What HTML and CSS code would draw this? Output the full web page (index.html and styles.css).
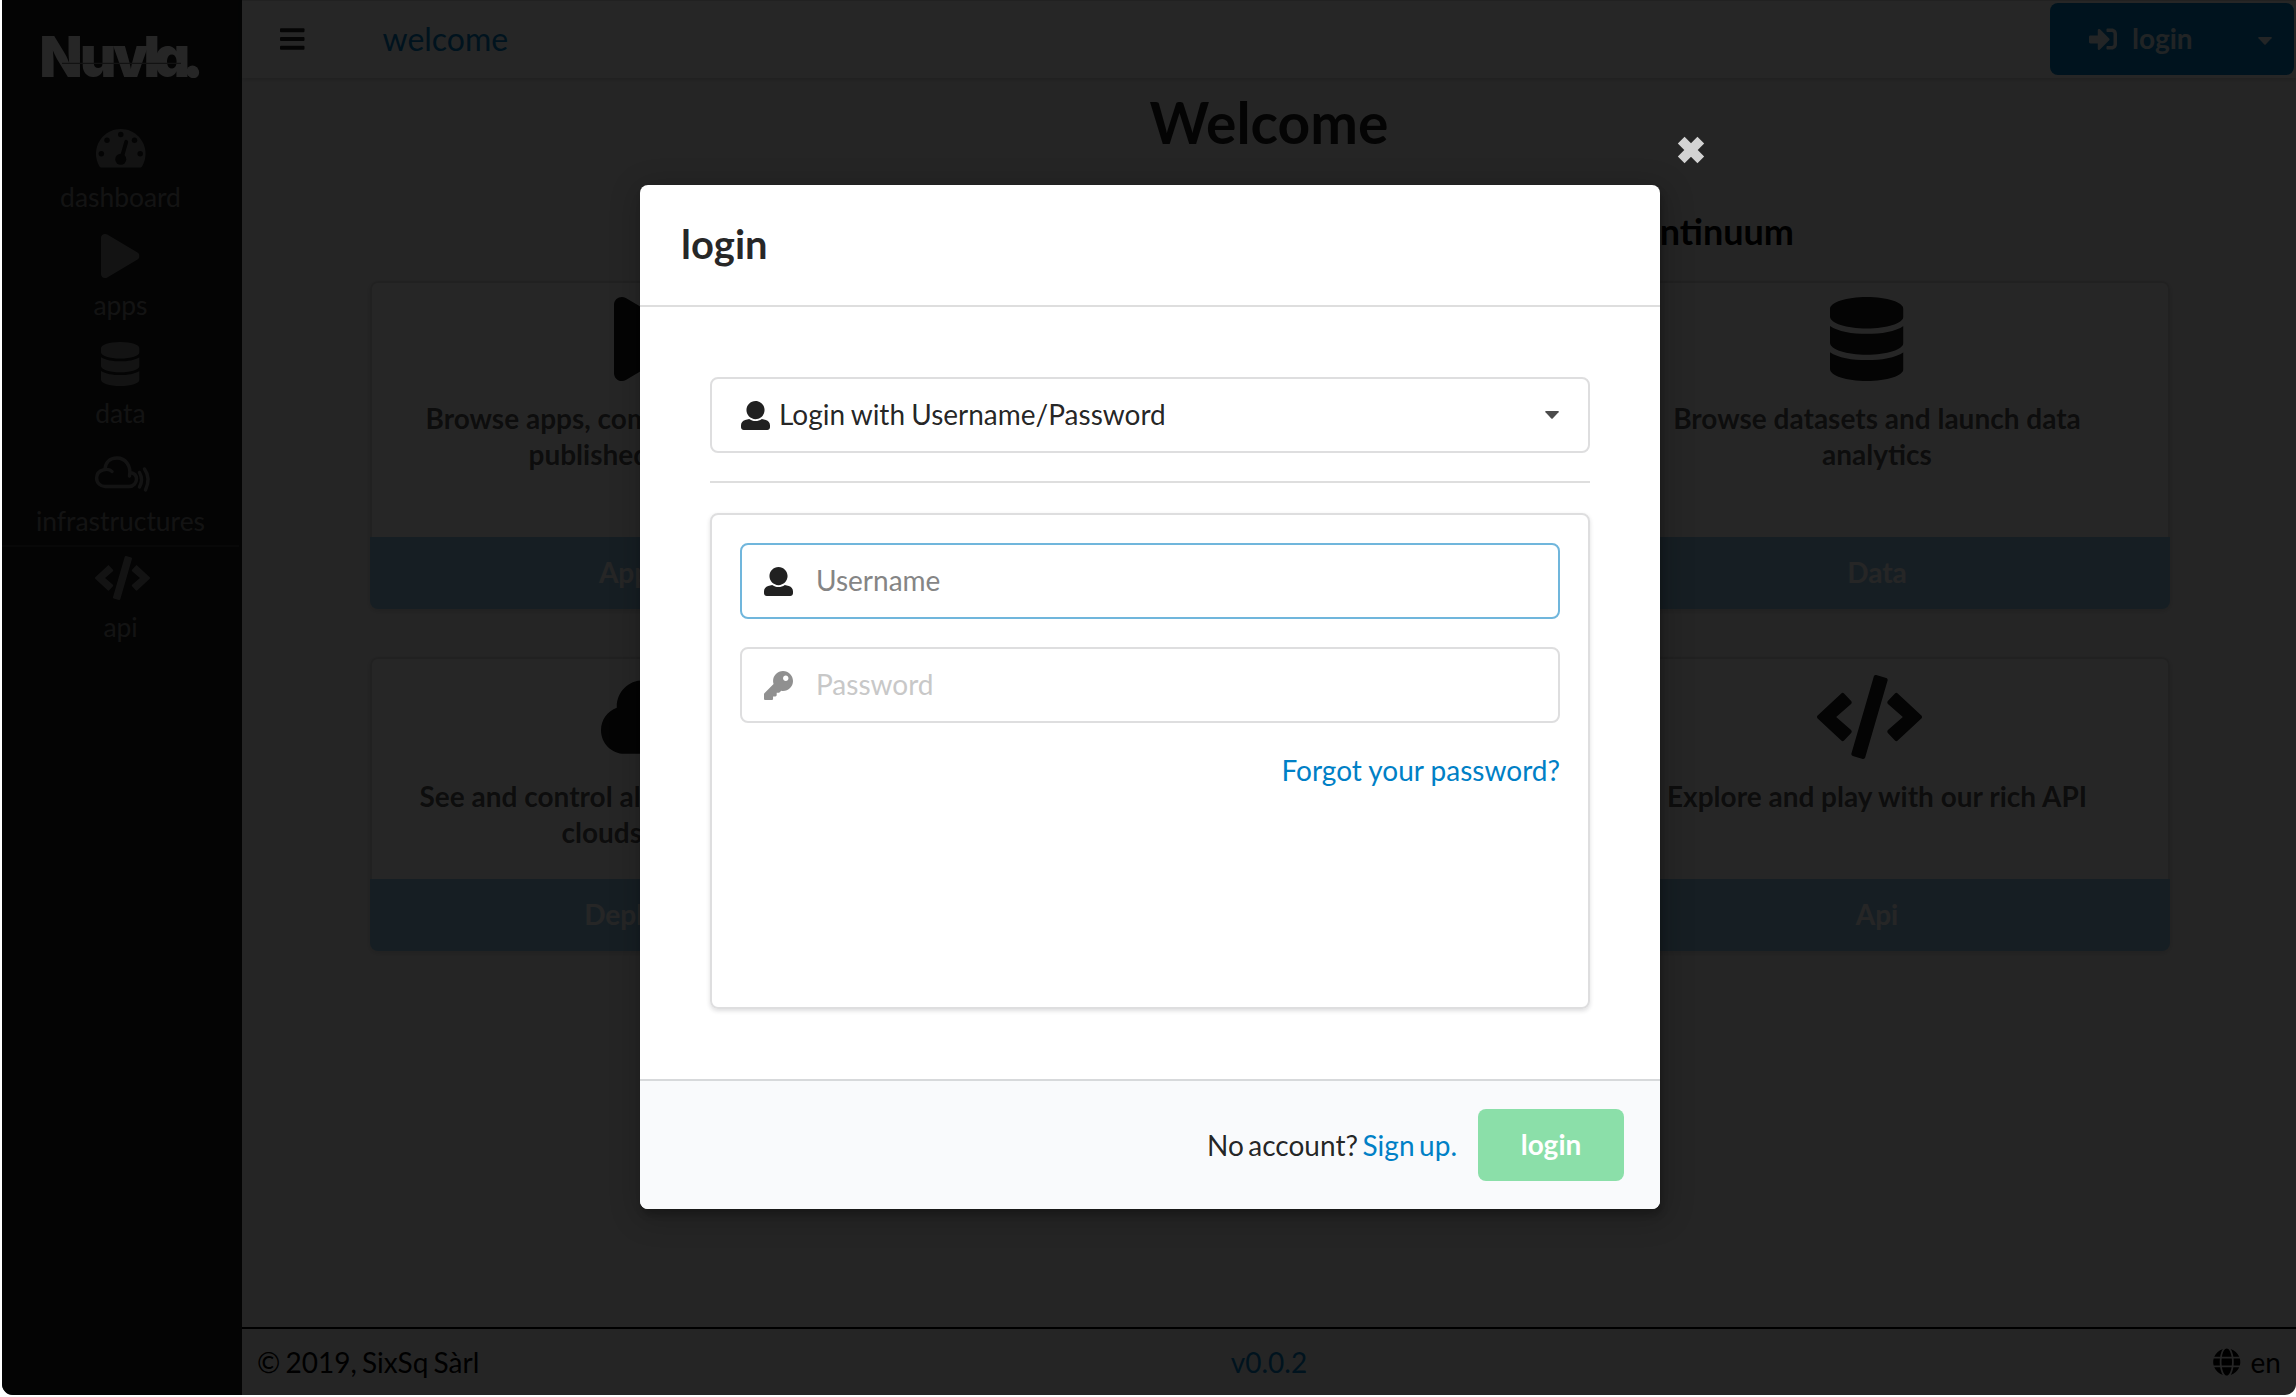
FILE: index.html
```html
<!DOCTYPE html>
<html lang="en">
<head>
<meta charset="utf-8">
<title>Nuvla</title>
<link rel="stylesheet" href="styles.css">
</head>
<body>
<svg class="defs" aria-hidden="true">
  <symbol id="play" viewBox="0 0 448 512"><path d="M424.4 214.7L72.4 6.6C43.8-10.3 0 6.1 0 47.9V464c0 37.5 40.7 60.1 72.4 41.3l352-208c31.4-18.5 31.5-64.1 0-82.6z"/></symbol>
  <symbol id="database" viewBox="0 0 448 512"><path d="M448 73.143v45.714C448 159.143 347.667 192 224 192S0 159.143 0 118.857V73.143C0 32.857 100.333 0 224 0s224 32.857 224 73.143zM448 176v102.857C448 319.143 347.667 352 224 352S0 319.143 0 278.857V176c48.125 33.143 136.208 48.572 224 48.572S399.874 209.143 448 176zm0 160v102.857C448 479.143 347.667 512 224 512S0 479.143 0 438.857V336c48.125 33.143 136.208 48.572 224 48.572S399.874 369.143 448 336z"/></symbol>
  <symbol id="code" viewBox="0 0 640 512"><path d="M278.9 511.5l-61-17.7c-6.4-1.8-10-8.5-8.2-14.9L346.2 8.7c1.8-6.4 8.5-10 14.9-8.2l61 17.7c6.4 1.8 10 8.5 8.2 14.9L293.8 503.3c-1.9 6.4-8.5 10.1-14.9 8.2zm-114-112.2l43.5-46.4c4.6-4.9 4.3-12.7-.8-17.2L117 256l90.6-79.7c5.1-4.5 5.5-12.3.8-17.2l-43.5-46.4c-4.5-4.8-12.1-5.1-17-.5L3.8 247.2c-5.1 4.7-5.1 12.8 0 17.5l144.1 135.1c4.9 4.6 12.5 4.4 17-.5zm327.2.6l144.1-135.1c5.1-4.7 5.1-12.8 0-17.5L492.1 112.1c-4.8-4.5-12.4-4.3-17 .5L431.6 159c-4.6 4.9-4.3 12.7.8 17.2L523 256l-90.6 79.7c-5.1 4.5-5.5 12.3-.8 17.2l43.5 46.4c4.5 4.9 12.1 5.1 17 .6z"/></symbol>
  <symbol id="cloud" viewBox="0 0 640 512"><path d="M537.6 226.6c4.1-10.7 6.4-22.4 6.4-34.6 0-53-43-96-96-96-19.7 0-38.1 6-53.3 16.2C367 64.2 315.3 32 256 32c-88.4 0-160 71.6-160 160 0 2.7.1 5.4.2 8.1C40.2 219.8 0 273.2 0 336c0 79.5 64.5 144 144 144h368c70.7 0 128-57.3 128-128 0-61.9-44-113.6-102.4-125.4z"/></symbol>
  <symbol id="user" viewBox="0 0 512 512"><path d="M256 0c88.366 0 160 71.634 160 160s-71.634 160-160 160S96 248.366 96 160 167.634 0 256 0zm183.283 333.821l-71.313-17.828c-74.923 53.89-165.738 41.864-223.94 0l-71.313 17.828C29.981 344.505 0 382.903 0 426.955V464c0 26.51 21.49 48 48 48h416c26.51 0 48-21.49 48-48v-37.045c0-44.052-29.981-82.45-72.717-93.134z"/></symbol>
</svg>

<div class="window">
  <nav class="sidebar">
    <svg class="logo" viewBox="0 0 160 50" role="img" aria-label="Nuvla.">
      <text class="logo-text" y="47" x="-2.5 38 71 101.5 112 141">Nuvla.</text>
      <circle cx="150.5" cy="41.5" r="6"/>
      <path class="logo-cut" d="M20 33.3H139"/>
    </svg>
    <a class="item">
      <span class="glyph"><svg width="49.5" height="38.5" viewBox="0 0 576 448"><path d="M288 0C128.900 0 0 129 0 288c0 52.800 14.300 102.300 39 144.800 5.600 9.600 16.300 15.200 27.400 15.200h443.200c11.100 0 21.800-5.600 27.400-15.200 24.700-42.500 39-92 39-144.800C576 129 447.100 0 288 0z"/><g class="hole"><circle cx="288" cy="64" r="32"/><circle cx="128" cy="132" r="32"/><circle cx="448" cy="132" r="32"/><circle cx="62" cy="288" r="32"/><circle cx="514" cy="288" r="32"/><circle cx="288" cy="352" r="64"/><path d="M300 330L352 150" stroke-width="46" stroke-linecap="round"/></g></svg></span>
      <span class="label">dashboard</span>
    </a>
    <a class="item"><span class="glyph"><svg width="38.500" height="44"><use href="#play"/></svg></span><span class="label">apps</span></a>
    <a class="item"><span class="glyph"><svg width="38.500" height="44"><use href="#database"/></svg></span><span class="label">data</span></a>
    <a class="item">
      <span class="glyph wide"><svg class="line" width="55" height="33" viewBox="0 0 55 33"><path d="M17 15.500C14 12 2 12.500 1.600 22c0 5 4 8.500 8.500 8.500H34c4.500 0 7.500-3.500 7.500-7.500 0-3.500-2.500-6-6.500-6.500M34.500 20c2-10-4-18-12.500-18C14.500 2 10.500 7 10 13"/><path d="M44.500 16.500q4 7 0 14.500M49.500 13q6.500 9 1 21"/></svg></span>
      <span class="label">infrastructures</span>
    </a>
    <div class="rule"></div>
    <a class="item last"><span class="glyph wide"><svg width="55" height="44"><use href="#code"/></svg></span><span class="label">api</span></a>
  </nav>

  <div class="page">
    <header class="topbar">
      <svg class="bars" width="24.500" height="28" viewBox="0 0 448 512"><rect y="60" width="448" height="72" rx="16"/><rect y="220" width="448" height="72" rx="16"/><rect y="380" width="448" height="72" rx="16"/></svg>
      <a class="crumb">welcome</a>
      <button class="session">
        <svg width="28" height="28" viewBox="0 0 512 512"><path d="M416 448h-84c-6.600 0-12-5.400-12-12v-40c0-6.600 5.400-12 12-12h84c17.700 0 32-14.300 32-32V160c0-17.700-14.300-32-32-32h-84c-6.600 0-12-5.400-12-12V76c0-6.600 5.400-12 12-12h84c53 0 96 43 96 96v192c0 53-43 96-96 96zm-47-201L201 79c-15-15-41-4.500-41 17v96H24c-13.300 0-24 10.700-24 24v96c0 13.300 10.700 24 24 24h136v96c0 21.500 26 32 41 17l168-168c9.300-9.400 9.300-24.600 0-34z"/></svg>
        <span>login</span>
        <svg class="caret" width="14" height="8" viewBox="0 0 14 8"><path d="M1 0h12q1.500 0 .5 1.300L7.700 7.500q-.7.700-1.400 0L.5 1.300Q-.5 0 1 0z"/></svg>
      </button>
    </header>

    <main class="content">
      <h1>Welcome</h1>
      <h2>Edge to cloud continuum</h2>
      <div class="cards">
        <section class="card">
          <svg class="pic" width="73.500" height="84"><use href="#play"/></svg>
          <p class="apps-a">Browse apps, compose</p><p class="apps-b">published apps</p>
          <a class="action">App Store</a>
        </section>
        <section class="card"></section>
        <section class="card">
          <svg class="pic" width="73.500" height="84"><use href="#database"/></svg>
          <p>Browse datasets and launch data</p><p>analytics</p>
          <a class="action">Data</a>
        </section>
        <section class="card low">
          <svg class="pic wide" width="105" height="84"><use href="#cloud"/></svg>
          <p class="dep-a">See and control all your</p><p class="dep-b">clouds apps</p>
          <a class="action">Deployment</a>
        </section>
        <section class="card low"></section>
        <section class="card low">
          <svg class="pic wide" width="105" height="84"><use href="#code"/></svg>
          <p>Explore and play with our rich API</p>
          <a class="action">Api</a>
        </section>
      </div>
    </main>

    <footer class="footer">
      <span>© 2019, SixSq Sàrl</span>
      <a>v0.0.2</a>
      <span class="lang"><svg width="27.500" height="28" viewBox="0 0 496 512"><path d="M336.500 160C322 70.700 287.800 8 248 8s-74 62.700-88.500 152h177zM152 256c0 22.200 1.200 43.500 3.300 64h185.300c2.100-20.500 3.300-41.800 3.300-64s-1.200-43.500-3.300-64H155.300c-2.100 20.500-3.300 41.800-3.300 64zm324.700-96c-28.600-67.900-86.500-120.400-158-141.600 24.400 33.800 41.200 84.700 50 141.600h108zM177.200 18.400C105.800 39.600 47.800 92.100 19.300 160h108c8.700-56.900 25.500-107.800 49.900-141.600zM487.400 192H372.700c2.100 21 3.300 42.500 3.300 64s-1.200 43-3.300 64h114.600c5.500-20.500 8.600-41.800 8.600-64s-3.100-43.500-8.500-64zM120 256c0-21.500 1.200-43 3.300-64H8.600C3.200 212.500 0 233.800 0 256s3.200 43.500 8.600 64h114.600c-2-21-3.200-42.500-3.200-64zm39.500 96c14.500 89.300 48.700 152 88.500 152s74-62.700 88.500-152h-177zm159.300 141.600c71.400-21.200 129.400-73.700 158-141.600h-108c-8.800 56.900-25.600 107.800-50 141.600zM19.300 352c28.600 67.900 86.500 120.400 158 141.600-24.400-33.800-41.200-84.700-50-141.600h-108z"/></svg>en</span>
    </footer>
  </div>

  <div class="dimmer">
    <div class="modal">
      <svg class="close" width="28" height="28" viewBox="0 0 28 28"><path d="M4.200 4.200L23.800 23.800M23.800 4.200L4.200 23.800"/></svg>
      <div class="modal-head">login</div>
      <div class="modal-body">
        <div class="field select">
          <svg width="29" height="29"><use href="#user"/></svg>
          <span>Login with Username/Password</span>
          <svg class="caret" width="14" height="8" viewBox="0 0 14 8"><path d="M1 0h12q1.500 0 .5 1.300L7.700 7.500q-.7.700-1.400 0L.5 1.300Q-.5 0 1 0z"/></svg>
        </div>
        <hr>
        <form class="segment">
          <div class="field focus"><svg width="29" height="29"><use href="#user"/></svg><span>Username</span></div>
          <div class="field idle"><svg width="29" height="29" viewBox="0 0 512 512"><path d="M512 176.001C512 273.203 433.202 352 336 352c-11.220 0-22.190-1.062-32.827-3.069l-24.012 27.014A23.999 23.999 0 0 1 261.223 384H224v40c0 13.255-10.745 24-24 24h-40v40c0 13.255-10.745 24-24 24H24c-13.255 0-24-10.745-24-24v-78.059c0-6.365 2.529-12.470 7.029-16.971l161.802-161.802C163.108 213.814 160 195.271 160 176 160 78.798 238.797.001 335.999 0 433.488-.001 512 78.511 512 176.001zM336 128c0 26.510 21.490 48 48 48s48-21.490 48-48-21.490-48-48-48-48 21.490-48 48z"/></svg><span>Password</span></div>
          <a class="forgot">Forgot your password?</a>
        </form>
      </div>
      <div class="modal-foot">
        <span class="signup">No account? <a>Sign up.</a></span>
        <button class="submit">login</button>
      </div>
    </div>
  </div>
</div>
</body>
</html>
```
FILE: styles.css
```css
* { box-sizing: border-box; }
body {
  margin: 0;
  background: #fff;
  font: 28px/40px Lato, "Liberation Sans", sans-serif;
  color: rgba(0, 0, 0, .87);
}
svg { display: block; flex: none; fill: currentColor; overflow: visible; }
button { font: inherit; border: 0; }
h1, h2, p { margin: 0; }
a { color: #0080c6; }
.defs { position: absolute; width: 0; height: 0; }

.window {
  position: relative;
  display: flex;
  margin-left: 2px;
  width: 2294px;
  height: 1395px;
  border-radius: 0 0 11px 11px;
  overflow: hidden;
}

/* sidebar */
.sidebar {
  width: 240px;
  padding: 30px 3px 0 0;
  background: #1b1c1d;
  display: flex;
  flex-direction: column;
  align-items: center;
}
.logo { width: 160px; height: 50px; margin: 0 0 46px 3px; fill: #fff; }
.logo-text { font: 900 56px Inter, sans-serif; font-feature-settings: "cv11"; }
.logo-cut { stroke: #777; stroke-width: 1.2; }
.item {
  width: 100%;
  height: 108px;
  display: flex;
  flex-direction: column;
  align-items: center;
  gap: 12px;
  color: #828282;
}
.glyph { width: 52px; height: 44px; display: flex; align-items: center; justify-content: center; }
.glyph.wide { justify-content: flex-start; }
.hole { fill: #1b1c1d; stroke: #1b1c1d; }
.line { fill: none; stroke: currentColor; stroke-width: 3.4; stroke-linecap: round; }
.label { font-size: 26.4px; line-height: 31px; }
.rule { align-self: stretch; height: 2px; margin: -13px 0 9px; background: #38393a; }

/* page */
.page { flex: 1; display: flex; flex-direction: column; background: #f8f8f8; }
.topbar {
  height: 78px;
  display: flex;
  align-items: center;
  padding: 0 2px 2px 38px;
  background: #fff;
  border-top: 1px solid #ddd;
  box-shadow: 0 2px 4px rgba(34, 36, 38, .15);
}
.bars { margin-right: 78px; }
.crumb { font-size: 32px; }
.session {
  margin-left: auto;
  width: 244px;
  height: 72px;
  padding: 0 22px 0 39px;
  display: flex;
  align-items: center;
  gap: 15px;
  border-radius: 8px;
  background: #0080c6;
  color: rgba(255, 255, 255, .9);
  font-weight: 700;
}
.session span { padding-bottom: 1px; }
.session .caret { margin-left: auto; margin-top: 4px; }

.content { flex: 1; }
h1 { font-size: 57px; line-height: 72px; text-align: center; margin-top: 8px; }
h2 { font-size: 36px; line-height: 46px; text-align: right; padding-right: 502px; margin-top: 50px; color: #000; }
.cards {
  display: grid;
  grid-template: 328px 294px / repeat(3, 584px);
  gap: 48px 24px;
  margin: 27px 0 0 128px;
}
.card {
  display: flex;
  flex-direction: column;
  align-items: center;
  padding-top: 16px;
  border-radius: 8px;
  background: #fff;
  box-shadow: inset 0 0 0 2px #dedfdf, 0 2px 6px #d4d4d5;
  overflow: hidden;
  font-weight: 700;
}
.card.low { padding-top: 18px; }
.pic { margin: 0 23px 19px 0; color: #1b1c1d; }
.pic.wide { margin-right: 17px; }
.card p { line-height: 36px; padding-right: 2px; white-space: nowrap; color: rgba(0, 0, 0, .68); }
.card .apps-a { width: 473px; }
.card .apps-b { width: 267px; }
.card .dep-a { width: 485px; }
.card .dep-b { width: 201px; }
.action {
  margin-top: auto;
  width: 100%;
  height: 72px;
  padding-right: 2px;
  line-height: 70px;
  text-align: center;
  background: #93c8ec;
  color: #fff;
}
.footer {
  height: 68px;
  padding: 0 15px 1px;
  display: grid;
  grid-template-columns: 1fr auto 1fr;
  align-items: center;
  border-top: 2px solid #000;
  color: #000;
  word-spacing: -2px;
}
.lang { display: flex; align-items: center; justify-content: flex-end; gap: 10px; }

/* login dialog */
.dimmer {
  position: absolute;
  inset: 0;
  padding: 185px 0 0 638px;
  background: rgba(0, 0, 0, .85);
}
.modal {
  position: relative;
  width: 1020px;
  height: 1024px;
  display: flex;
  flex-direction: column;
  background: #fff;
  border-radius: 8px;
  box-shadow: 2px 6px 6px rgba(0, 0, 0, .2), 2px 6px 30px 4px rgba(0, 0, 0, .2);
}
.close { position: absolute; left: 1037px; top: -49px; stroke: #d3d3d3; stroke-width: 9.5; stroke-linecap: butt; }
.modal-head {
  height: 122px;
  padding: 34px 41px;
  font-size: 40px;
  line-height: 50px;
  font-weight: 700;
  border-bottom: 2px solid #dedede;
  color: rgba(0, 0, 0, .85);
}
.modal-body { flex: 1; padding: 70px; }
.field {
  height: 76px;
  display: flex;
  align-items: center;
  border: 2px solid #dededf;
  border-radius: 8px;
  padding-left: 22px;
  gap: 23px;
}
.field span { padding-bottom: 2px; }
.select { padding: 0 29px; gap: 9px; word-spacing: -1px; }
.select .caret { margin-left: auto; color: #4c4c4c; }
hr { border: 0; height: 2px; margin: 28px 0 30px; background: #dedede; }
.segment {
  height: 496px;
  padding: 28px;
  border: 2px solid #dededf;
  border-radius: 8px;
  box-shadow: 0 2px 4px rgba(34, 36, 38, .15);
  display: flex;
  flex-direction: column;
  gap: 28px;
}
.focus { border-color: #70b6dc; }
.focus span { color: #858585; }
.idle span { color: #c8c8c8; }
.idle svg { color: #909090; }
.forgot { align-self: flex-end; margin-top: -1px; }
.modal-foot {
  height: 130px;
  padding: 0 36px 0 0;
  display: flex;
  align-items: center;
  justify-content: flex-end;
  gap: 21px;
  border-top: 2px solid #d7d9db;
  border-radius: 0 0 8px 8px;
  background: #f9fafc;
}
.signup { padding-bottom: 1px; word-spacing: -2.6px; }
.submit {
  width: 146px;
  height: 72px;
  padding: 0 0 2px;
  border-radius: 8px;
  background: #8bdfa9;
  color: #fff;
  font-weight: 700;
}
```
